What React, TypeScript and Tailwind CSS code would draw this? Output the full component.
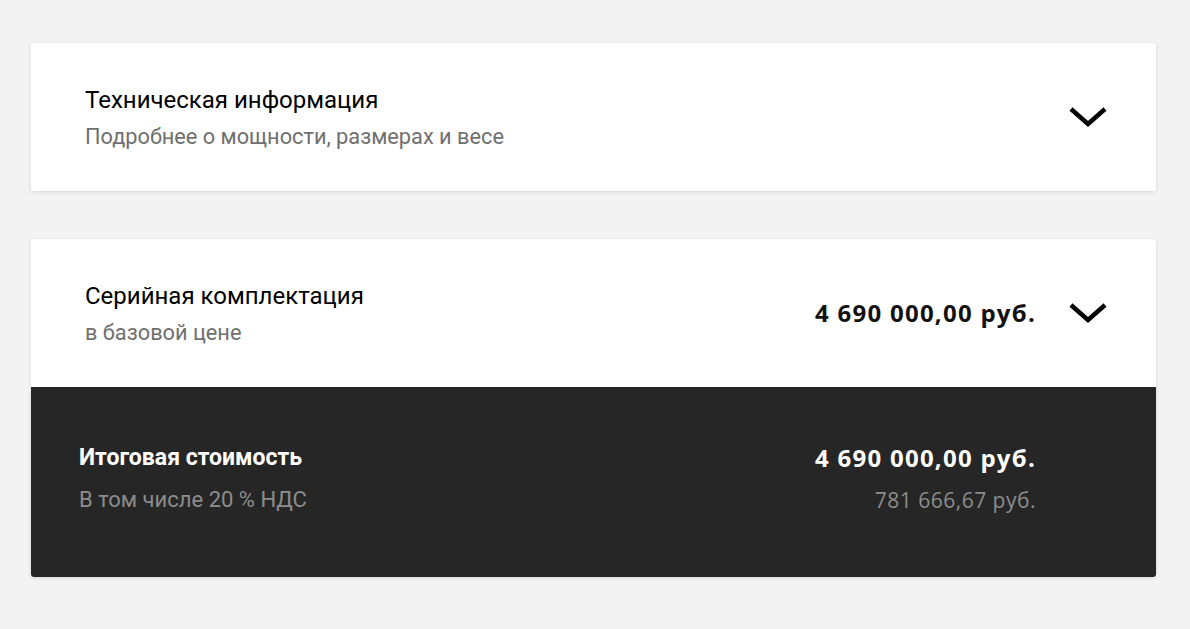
import React from 'react';

function Chevron() {
  return (
    <svg width="38" height="22" viewBox="0 0 38 22" fill="none" className="shrink-0">
      <path d="M2 3 L19 18 L36 3" stroke="#000" strokeWidth="4.5" strokeLinejoin="miter" />
    </svg>
  );
}

export default function App() {
  return (
    <div className="min-h-[629px] bg-[#f3f3f3] pt-[43px] pl-[31px]" style={{ fontFamily: 'Roboto, sans-serif' }}>
      <div className="w-[1125px] flex flex-col gap-[48px]">
        {/* Техническая информация */}
        <div className="h-[148px] bg-white rounded-[2px] shadow-[0_1px_4px_rgba(0,0,0,0.12)] flex items-center pl-[54px] pr-[49px]">
          <div className="flex-1 pt-[2px]">
            <div className="text-[24px] leading-[28px] text-black">Техническая информация</div>
            <div className="text-[21.75px] leading-[28px] mt-[9px] text-[#6f6f6f]">Подробнее о мощности, размерах и весе</div>
          </div>
          <Chevron />
        </div>

        {/* Серийная комплектация + итог */}
        <div className="rounded-[3px] overflow-hidden shadow-[0_1px_4px_rgba(0,0,0,0.12)]">
          <div className="h-[148px] bg-white flex items-center pl-[54px] pr-[49px]">
            <div className="flex-1 pt-[2px]">
              <div className="text-[24px] leading-[28px] text-black">Серийная комплектация</div>
              <div className="text-[21.75px] leading-[28px] mt-[9px] text-[#6f6f6f]">в базовой цене</div>
            </div>
            <div className="text-[24px] tracking-[1.25px] font-bold text-[#111] mr-[33px]" style={{ fontFamily: '"Open Sans", sans-serif' }}>
              4 690 000,00 руб.
            </div>
            <Chevron />
          </div>
          <div className="h-[190px] bg-[#262626] flex items-center pl-[48px] pr-[120px]">
            <div className="flex-1 pb-[6px]">
              <div className="text-[23px] leading-[28px] font-bold text-white">Итоговая стоимость</div>
              <div className="text-[22px] leading-[28px] mt-[14px] text-[#8c8c8c]">В том числе 20 % НДС</div>
            </div>
            <div className="text-right pb-[6px]" style={{ fontFamily: '"Open Sans", sans-serif' }}>
              <div className="text-[24px] tracking-[1.25px] leading-[28px] font-bold text-white">4 690 000,00 руб.</div>
              <div className="text-[21px] tracking-[0.5px] leading-[28px] mt-[14px] text-[#8c8c8c]">781 666,67 руб.</div>
            </div>
          </div>
        </div>
      </div>
    </div>
  );
}
